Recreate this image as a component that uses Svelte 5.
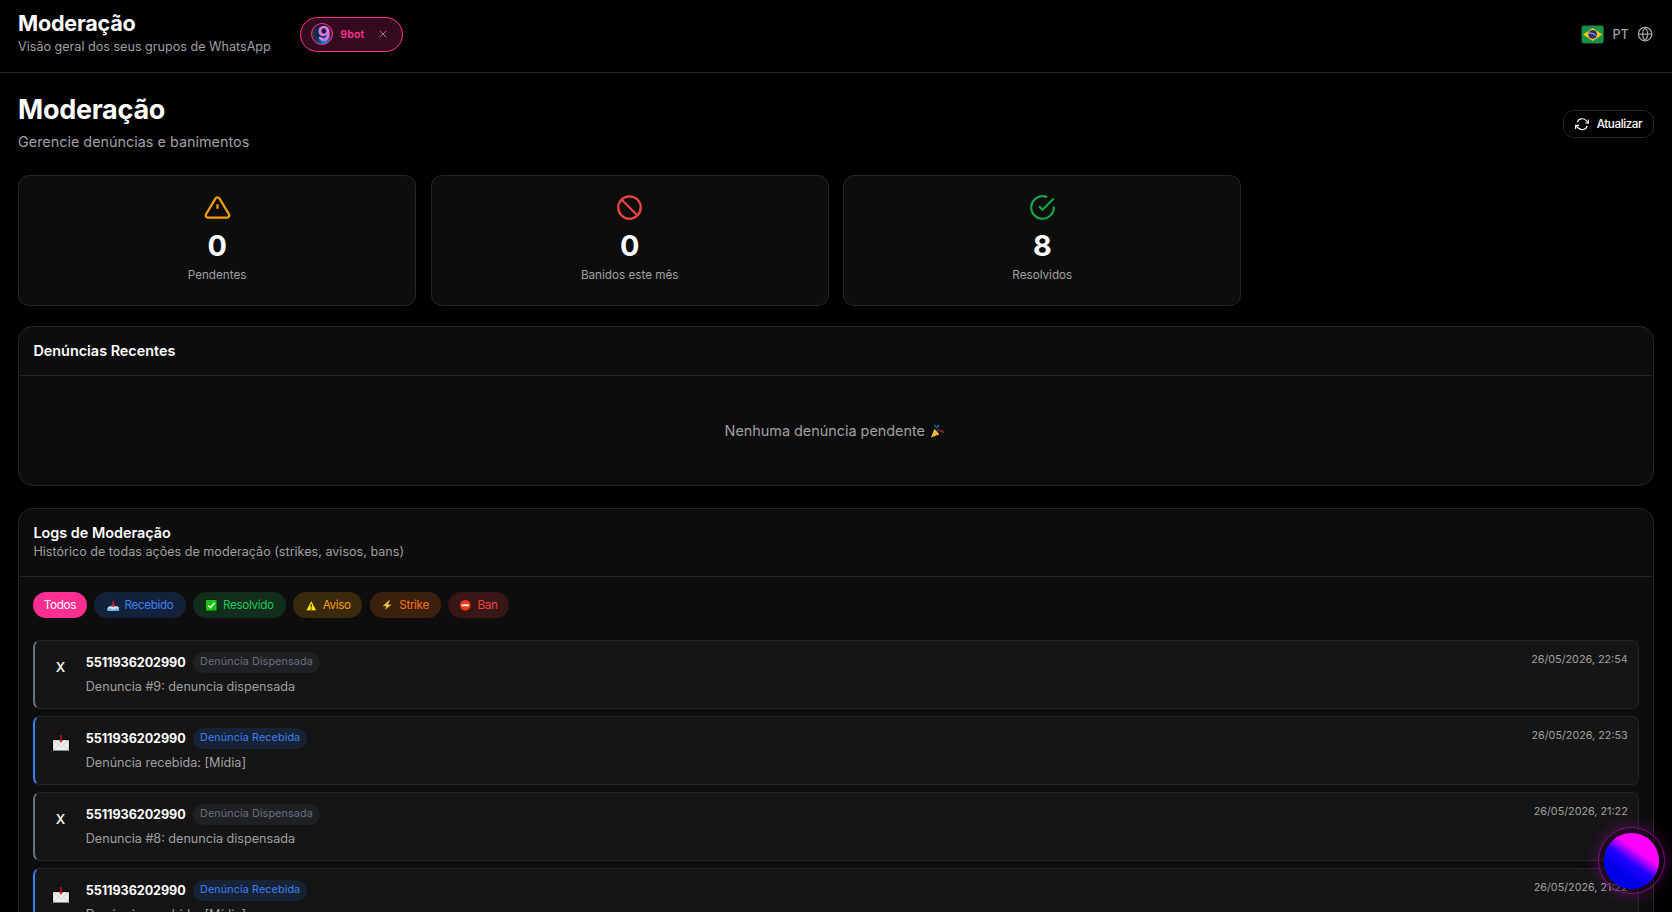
<script>
  let filter = "todos";

  const stats = [
    { icon: "warning", value: 0, label: "Pendentes" },
    { icon: "ban", value: 0, label: "Banidos este mês" },
    { icon: "check", value: 8, label: "Resolvidos" },
  ];

  const filters = [
    { id: "todos", label: "Todos" },
    { id: "recebido", label: "Recebido" },
    { id: "resolvido", label: "Resolvido" },
    { id: "aviso", label: "Aviso" },
    { id: "strike", label: "Strike" },
    { id: "ban", label: "Ban" },
  ];

  const logs = [
    { type: "dispensada", text: "Denuncia #9: denuncia dispensada", date: "26/05/2026, 22:54" },
    { type: "recebida", text: "Denúncia recebida: [Mídia]", date: "26/05/2026, 22:53" },
    { type: "dispensada", text: "Denuncia #8: denuncia dispensada", date: "26/05/2026, 21:22" },
    { type: "recebida", text: "Denúncia recebida: [Mídia]", date: "26/05/2026, 21:22" },
  ];
</script>

<div class="page">
  <header class="topbar">
    <div class="brand">
      <h2>Moderação</h2>
      <p>Visão geral dos seus grupos de WhatsApp</p>
    </div>
    <div class="chip">
      <span class="avatar">9</span>
      <span class="bot-name">9bot</span>
      <svg class="close" viewBox="0 0 10 10"><path d="M1 1l8 8M9 1l-8 8" /></svg>
    </div>
    <div class="lang">
      <svg class="flag" viewBox="0 0 26 21">
        <rect x=".5" y=".5" width="25" height="20" rx="3" fill="#129347" stroke="#26332a" />
        <path d="M13 3.2L23.6 10.5 13 17.8 2.4 10.5z" fill="#ffcb05" />
        <circle cx="13" cy="10.5" r="4.9" fill="#2e2b85" />
        <path d="M8.8 9.1c3-.6 6.200.6 8.400 3.300" stroke="#c8cbe8" stroke-width="1" fill="none" />
      </svg>
      <span>PT</span>
      <svg class="globe" viewBox="0 0 24 24">
        <circle cx="12" cy="12" r="10" /><path d="M2 12h20M12 2a15 15 0 0 1 0 20M12 2a15 15 0 0 0 0 20" />
      </svg>
    </div>
  </header>

  <main>
    <div class="heading">
      <div class="heading-text">
        <h1>Moderação</h1>
        <p>Gerencie denúncias e banimentos</p>
      </div>
      <button class="refresh">
        <svg viewBox="0 0 24 24">
          <path d="M23 4v6h-6M1 20v-6h6M3.500 9a9 9 0 0 1 14.900-3.400L23 10M1 14l4.600 4.400A9 9 0 0 0 20.500 15" />
        </svg>
        Atualizar
      </button>
    </div>

    <div class="stats">
      {#each stats as s}
        <div class="stat">
          <svg class={s.icon} viewBox="0 0 24 24">
            {#if s.icon === "warning"}
              <path d="M10.300 3.900L1.800 18a2 2 0 0 0 1.700 3h17a2 2 0 0 0 1.700-3L13.700 3.900a2 2 0 0 0-3.400 0zM12 9v4" />
            {:else if s.icon === "ban"}
              <circle cx="12" cy="12" r="10" /><path d="M4.900 4.900l14.200 14.200" />
            {:else}
              <path d="M22 11.100V12a10 10 0 1 1-5.900-9.100M22 4L12 14l-3-3" />
            {/if}
          </svg>
          <strong>{s.value}</strong>
          <span>{s.label}</span>
        </div>
      {/each}
    </div>

    <section class="panel">
      <div class="panel-head"><h3>Denúncias Recentes</h3></div>
      <div class="empty">
        Nenhuma denúncia pendente
        <svg viewBox="0 0 16 16">
          <path d="M1 15L5 5.500l5.500 5.800z" fill="#fdc33c" />
          <path d="M2.500 11.500l3 2.200M4 8l4.500 4.300" stroke="#e8962a" />
          <path d="M5.500 3.500l1.500-1M7 5l2-3M9 1l1 2M4.500 1.500l1.500 0" stroke="#087c9c" stroke-width="1.300" />
          <path d="M8 8l2.500-2" stroke="#7043b5" stroke-width="1.400" />
          <path d="M11 8.500l3-1.500M12 6.500l2 3M15 8v2" stroke="#952c20" stroke-width="1.200" />
        </svg>
      </div>
    </section>

    <section class="panel">
      <div class="panel-head logs-head">
        <h3>Logs de Moderação</h3>
        <p>Histórico de todas ações de moderação (strikes, avisos, bans)</p>
      </div>
      <div class="filters">
        {#each filters as f}
          <button class="pill {f.id}" on:click={() => (filter = f.id)}>
            {#if f.id === "recebido"}
              <svg viewBox="0 0 14 14">
                <path d="M2.500 8h9L13.500 10v3H.5v-3z" fill="#c9e5f8" /><path d="M.5 10.500h4l1 1h3l1-1h4V13H.5z" fill="#6bb4e7" />
                <path d="M7 2.500v5" stroke="#dc2637" stroke-width="1.500" /><path d="M4.500 6.500h5L7 9.500z" fill="#dc2637" />
              </svg>
            {:else if f.id === "resolvido"}
              <svg viewBox="0 0 14 14">
                <rect x=".6" y=".6" width="12.800" height="12.800" fill="#16c60c" stroke="#071d0a" />
                <path d="M3.500 7.200l2.500 2.500 4.800-5.500" fill="none" stroke="#fff" stroke-width="1.500" />
              </svg>
            {:else if f.id === "aviso"}
              <svg viewBox="0 0 14 14">
                <path d="M7 1.500L13.200 13.200H.8z" fill="#fde300" stroke="#171204" stroke-width=".8" />
                <path d="M7 5.500v4M7 10.500v1.400" stroke="#37300a" stroke-width="1.300" />
              </svg>
            {:else if f.id === "strike"}
              <svg viewBox="0 0 14 14"><path d="M8.800 1L1 8.200h4.500L3.200 13.200 13 5.800H8.200L10.500 1z" fill="#fdc33c" stroke="#171204" stroke-width=".7" /></svg>
            {:else if f.id === "ban"}
              <svg viewBox="0 0 14 14">
                <circle cx="7" cy="7" r="6.400" fill="#f03a17" stroke="#210b08" stroke-width=".7" /><path d="M3 7h8" stroke="#fff" stroke-width="2" />
              </svg>
            {/if}
            {f.label}
          </button>
        {/each}
      </div>
      <div class="logs">
        {#each logs as log}
          <article class="log {log.type}">
            <div class="log-icon">
              {#if log.type === "recebida"}
                <svg viewBox="0 0 20 20">
                  <rect x=".6" y="6.200" width="18.800" height="12.800" fill="#eee" stroke="#050505" stroke-width="1.200" />
                  <path d="M1.500 7l8.500 7.500L18.500 7M1.500 18l6-5.500M18.500 18l-6-5.500" fill="none" stroke="#c3c3c3" stroke-width=".8" />
                  <path d="M10 1v8" stroke="#e81224" stroke-width="1.300" /><path d="M8 7h4l-2 3z" fill="#e81224" />
                </svg>
              {:else}
                X
              {/if}
            </div>
            <div class="log-body">
              <div class="log-title">
                <b>5511936202990</b>
                <span class="badge">{log.type === "recebida" ? "Denúncia Recebida" : "Denúncia Dispensada"}</span>
              </div>
              <p>{log.text}</p>
            </div>
            <time>{log.date}</time>
          </article>
        {/each}
      </div>
    </section>
  </main>

  <button class="fab" aria-label="Assistente"><span></span></button>
</div>

<style>
  :global(body) {
    background: #000;
    overflow: hidden;
  }

  .page {
    zoom: 0.9;
    height: calc(912px / 0.9);
    overflow: hidden;
    background: #000;
    color: #fff;
    font-family: Inter, sans-serif;
    font-size: 16px;
  }

  h1, h2, h3, p {
    margin: 0;
  }

  p {
    color: #a0a0a0;
  }

  button {
    font-family: inherit;
    color: inherit;
    cursor: pointer;
  }

  .topbar {
    display: flex;
    align-items: center;
    box-sizing: border-box;
    height: 81px;
    padding: 0 21px 4px 20px;
    border-bottom: 1px solid #262626;
  }

  .brand {
    padding-bottom: 2px;
  }

  .brand h2 {
    font-size: 24px;
    line-height: 30px;
    letter-spacing: -0.01em;
  }

  .brand p {
    font-size: 14px;
    line-height: 22px;
  }

  .chip {
    display: flex;
    align-items: center;
    box-sizing: border-box;
    height: 39px;
    margin-left: 32px;
    padding: 0 17px 0 12px;
    border: 1px solid #ff2f92;
    border-radius: 20px;
    background: #330a1e;
  }

  .avatar {
    width: 22px;
    height: 22px;
    border: 1px solid #ff2f92;
    border-radius: 50%;
    background: radial-gradient(circle at 65% 95%, #0794e8, transparent 45%), linear-gradient(90deg, #24364b, #151225 45%, #4b1c57);
    color: #d77be0;
    font-size: 22px;
    font-weight: 700;
    line-height: 24px;
    text-align: center;
    text-indent: 4px;
  }

  .bot-name {
    margin: 0 16px 0 8px;
    color: #ff2f92;
    font-size: 12px;
    font-weight: 600;
  }

  .close {
    width: 9px;
    height: 9px;
    stroke: #a08795;
    stroke-width: 1.2;
  }

  .lang {
    display: flex;
    align-items: center;
    gap: 9px;
    margin-left: auto;
    color: #a0a0a0;
    font-size: 14px;
    font-weight: 500;
  }

  .flag {
    width: 26px;
    height: 21px;
  }

  .globe {
    width: 18px;
    height: 18px;
    fill: none;
    stroke: #a0a0a0;
    stroke-width: 2;
  }

  main {
    padding: 20px;
  }

  .heading {
    display: flex;
    align-items: center;
    justify-content: space-between;
    height: 73px;
    margin-bottom: 20px;
  }

  .heading-text {
    padding-bottom: 2px;
  }

  h1 {
    font-size: 30px;
    line-height: 40px;
    letter-spacing: -0.01em;
  }

  .heading p {
    margin-top: 2px;
    line-height: 26px;
    font-size: 16px;
  }

  .refresh {
    display: flex;
    align-items: center;
    gap: 8px;
    height: 31px;
    padding: 0 12px;
    border: 1px solid #262626;
    border-radius: 12px;
    background: #000;
    font-size: 13px;
    font-weight: 500;
    letter-spacing: -0.035em;
  }

  .refresh svg {
    width: 16px;
    height: 16px;
    fill: none;
    stroke: #fff;
    stroke-width: 2;
  }

  .stats {
    display: grid;
    grid-template-columns: repeat(4, 1fr);
    gap: 16px;
    margin-bottom: 22.5px;
  }

  .stat {
    display: flex;
    flex-direction: column;
    align-items: center;
    box-sizing: border-box;
    height: 146px;
    padding-top: 20px;
    border: 1px solid #262626;
    border-radius: 12px;
    background: #0d0d0d;
  }

  .stat svg {
    width: 30px;
    height: 30px;
    fill: none;
    stroke-width: 2;
  }

  .warning { stroke: #f59e0b; }
  .ban { stroke: #ef4444; }
  .check { stroke: #16a34a; }

  .stat strong {
    margin-top: 8px;
    font-size: 32px;
    line-height: 40px;
  }

  .stat span {
    margin-top: 2px;
    color: #a0a0a0;
    font-size: 13px;
    line-height: 20px;
  }

  .panel {
    margin-bottom: 24.5px;
    border: 1px solid #262626;
    border-radius: 16px;
    background: #0d0d0d;
  }

  .panel-head {
    display: flex;
    flex-direction: column;
    justify-content: center;
    height: 53.5px;
    padding: 0 16px;
    border-bottom: 1px solid #262626;
  }

  h3 {
    font-size: 16px;
    font-weight: 600;
    line-height: 22px;
  }

  .empty {
    display: flex;
    align-items: center;
    justify-content: center;
    gap: 6px;
    box-sizing: border-box;
    height: 121px;
    padding-right: 3px;
    color: #a0a0a0;
    font-size: 16px;
  }

  .empty svg {
    width: 16px;
    height: 16px;
    fill: none;
  }

  .logs-head {
    height: 74.4px;
  }

  .logs-head h3 {
    margin-top: -1px;
  }

  .logs-head p {
    font-size: 14px;
    line-height: 22px;
    margin-top: -1px;
  }

  .filters {
    display: flex;
    gap: 8px;
    padding: 16.5px 15px 25px;
  }

  .pill {
    display: flex;
    align-items: center;
    gap: 6px;
    height: 28.5px;
    padding: 0 13px;
    border: 0;
    border-radius: 15px;
    font-size: 13px;
    letter-spacing: -0.03em;
  }

  .pill svg {
    width: 14px;
    height: 14px;
  }

  .pill.todos { padding: 0 12.5px; background: #ff2f92; color: #fff; }
  .pill.recebido { padding: 0 13.5px; background: #14213a; color: #3b82f6; }
  .pill.resolvido { padding: 0 13.5px; background: #112d1c; color: #22c55e; }
  .pill.aviso { background: #3b290d; color: #f59e0b; }
  .pill.strike { background: #3c200e; color: #f97316; }
  .pill.ban { background: #391716; color: #ef4444; }

  .logs {
    display: flex;
    flex-direction: column;
    gap: 8px;
    padding: 0 16px 16px 15px;
  }

  .log {
    display: flex;
    box-sizing: border-box;
    height: 76.45px;
    padding: 12.5px 11px 0 13px;
    border: 1px solid #262626;
    border-left: 3px solid #3b82f6;
    border-radius: 8px;
    background: #151515;
  }

  .log.dispensada {
    border-left-color: #6b7280;
  }

  .log-icon {
    display: flex;
    align-items: center;
    justify-content: center;
    width: 32px;
    height: 32px;
    margin-right: 12px;
    font-size: 15px;
    font-weight: 500;
  }

  .log-icon svg {
    width: 20px;
    height: 20px;
  }

  .log-body {
    flex: 1;
  }

  .log-title {
    display: flex;
    align-items: center;
    gap: 8px;
  }

  .log-title b {
    font-size: 14px;
    font-weight: 700;
    letter-spacing: -0.005em;
  }

  .badge {
    padding: 0 8px;
    border-radius: 12px;
    background: #172235;
    color: #3b82f6;
    font-size: 12px;
    line-height: 23px;
    letter-spacing: 0.01em;
  }

  .dispensada .badge {
    background: #1e2022;
    color: #6b7280;
  }

  .log p {
    margin-top: 3px;
    font-size: 14px;
    line-height: 24px;
  }

  time {
    color: #a0a0a0;
    font-size: 12px;
    line-height: 18px;
  }

  .fab {
    position: fixed;
    right: 8px;
    bottom: 20px;
    display: flex;
    align-items: center;
    justify-content: center;
    width: 74px;
    height: 74px;
    padding: 0;
    border: 1px solid #860b86;
    border-radius: 50%;
    background: rgba(50, 0, 55, 0.35);
    box-shadow: 0 0 18px rgba(255, 0, 255, 0.25);
  }

  .fab span {
    width: 62px;
    height: 62px;
    border-radius: 50%;
    background: linear-gradient(35deg, #0000e8 30%, #2200ff 48%, #ff00ff 65%);
  }
</style>
